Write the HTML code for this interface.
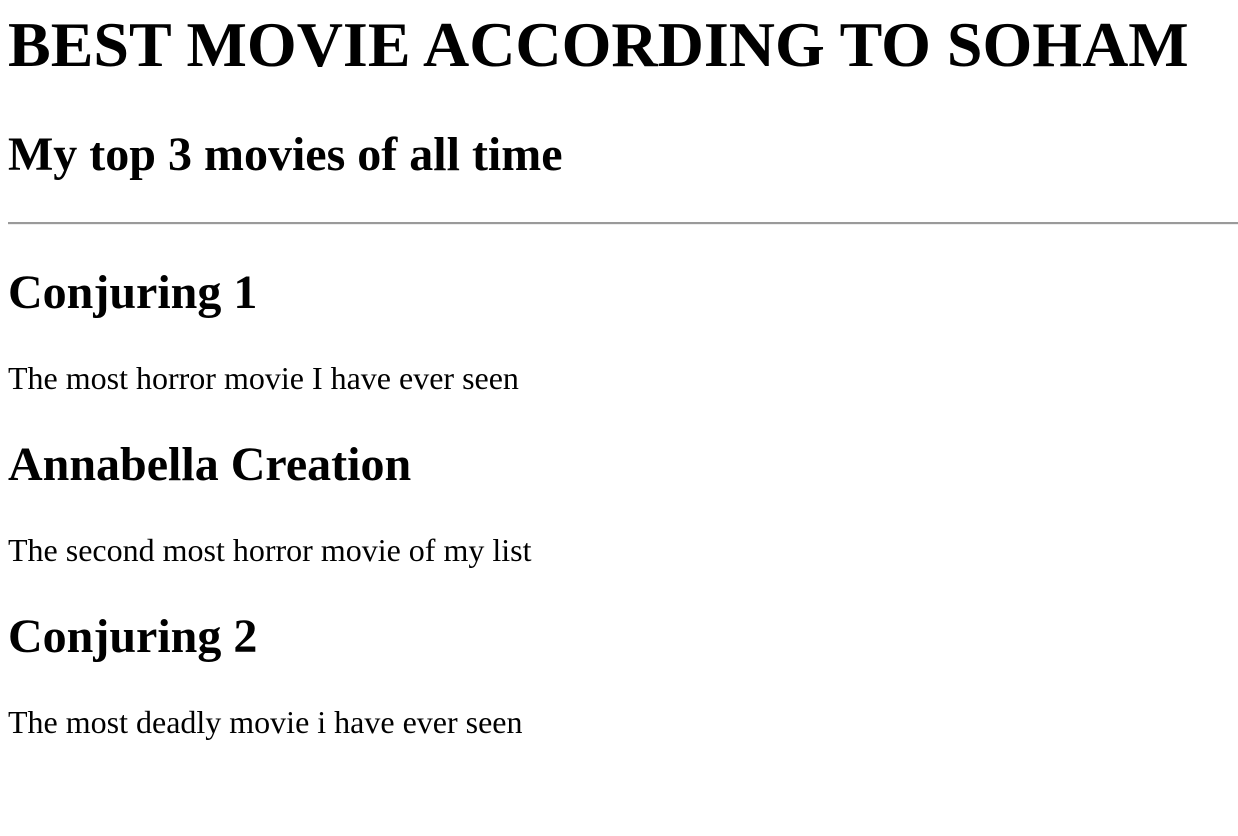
<!DOCTYPE html>
<html><head><meta charset="utf-8"><style>
html,body{margin:0;padding:0;background:#fff;overflow:hidden}
body{padding:8px 0 0 8px;font-family:"Liberation Serif","Times New Roman",serif;color:#000;width:1230px;height:828px}
h1{font-size:64px;margin:0;line-height:1.15;font-weight:bold}
h2{font-size:48px;margin:40px 0;line-height:1.15;font-weight:bold}
h2.first{margin-top:45px}
p{font-size:32px;margin:32px 0;line-height:1.15}
hr{margin:40px 0 0 0;border:0;border-top:2px solid #9a9a9a;border-bottom:1px solid #eee;height:0}
</style></head><body>
<h1>BEST MOVIE ACCORDING TO SOHAM</h1>
<h2 class="first">My top 3 movies of all time</h2>
<hr>
<h2>Conjuring 1</h2>
<p>The most horror movie I have ever seen</p>
<h2>Annabella Creation</h2>
<p>The second most horror movie of my list</p>
<h2>Conjuring 2</h2>
<p>The most deadly movie i have ever seen</p>
</body></html>
